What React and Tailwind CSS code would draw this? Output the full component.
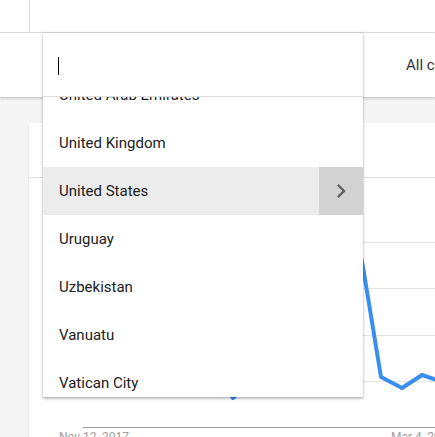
import React from "react";

const countries = [
  "United Arab Emirates",
  "United Kingdom",
  "United States",
  "Uruguay",
  "Uzbekistan",
  "Vanuatu",
  "Vatican City",
];

function ChevronRight() {
  return (
    <svg viewBox="0 0 24 24" className="h-7 w-7" fill="#616161">
      <path d="M10 6L8.59 7.41 13.17 12l-4.58 4.59L10 18l6-6z" />
    </svg>
  );
}

function CountryRow({ name, active }) {
  return (
    <div
      className={`flex h-12 items-center ${active ? "bg-[#ececec]" : "bg-white"}`}
    >
      <span className="flex-1 pl-4 text-[15px] text-[#212121]">{name}</span>
      {active ? (
        <span className="flex h-12 w-11 items-center justify-center bg-[#d2d2d2]">
          <ChevronRight />
        </span>
      ) : null}
    </div>
  );
}

function Chart() {
  const grid = [64, 110, 157, 203];
  return (
    <svg width="406" height="259" className="block">
      {grid.map((y) => (
        <line key={y} x1="54" x2="406" y1={y + 0.5} y2={y + 0.5} stroke="#e3e3e3" />
      ))}
      <line x1="54" x2="406" y1="249.5" y2="249.5" stroke="#9e9e9e" />
      <polyline
        fill="none"
        stroke="#3a8eef"
        strokeWidth="4"
        strokeLinejoin="round"
        points="54,150 90,140 130,170 165,185 190,200 204,220 218,208 250,170 290,90 322,30 334,89 352,199 373,210 393,197 408,202"
      />
      <text x="30" y="263" fontSize="12" fill="#9e9e9e" fontFamily="Roboto, sans-serif">
        Nov 12, 2017
      </text>
      <text x="362" y="263" fontSize="12" fill="#9e9e9e" fontFamily="Roboto, sans-serif">
        Mar 4, 2018
      </text>
    </svg>
  );
}

export default function App() {
  return (
    <div className="relative flex h-[437px] w-[435px] flex-col overflow-hidden bg-[#f5f5f5] font-['Roboto',sans-serif]">
      <div className="flex h-[33px] shrink-0 border-b border-[#e0e0e0] bg-white">
        <div className="w-[30px] border-r border-[#e0e0e0]" />
      </div>

      <div className="relative z-10 flex h-[64px] shrink-0 items-center bg-white shadow-[0_1px_3px_rgba(0,0,0,0.25)]">
        <div className="w-[406px] shrink-0" />
        <span className="whitespace-nowrap text-[15px] text-[#333]">All countries</span>
      </div>

      <div className="h-[26px] shrink-0" />

      <div className="ml-[29px] flex flex-1 flex-col bg-white shadow-[0_1px_2px_rgba(0,0,0,0.12)]">
        <div className="h-[55px] shrink-0 border-b border-[#e0e0e0]" />
        <Chart />
      </div>

      <div className="absolute left-[43px] top-[33px] z-20 flex h-[364px] w-[320px] flex-col bg-white shadow-[0_1px_3px_rgba(0,0,0,0.25),0_2px_2px_rgba(0,0,0,0.12)]">
        <div className="flex h-[64px] shrink-0 items-center border-b border-[#dcdcdc] pl-[15px]">
          <span className="mt-[2px] h-[18px] w-px bg-black" />
        </div>
        <div className="flex-1 overflow-hidden">
          <div className="-mt-[26px]">
            {countries.map((c) => (
              <CountryRow key={c} name={c} active={c === "United States"} />
            ))}
          </div>
        </div>
      </div>
    </div>
  );
}
